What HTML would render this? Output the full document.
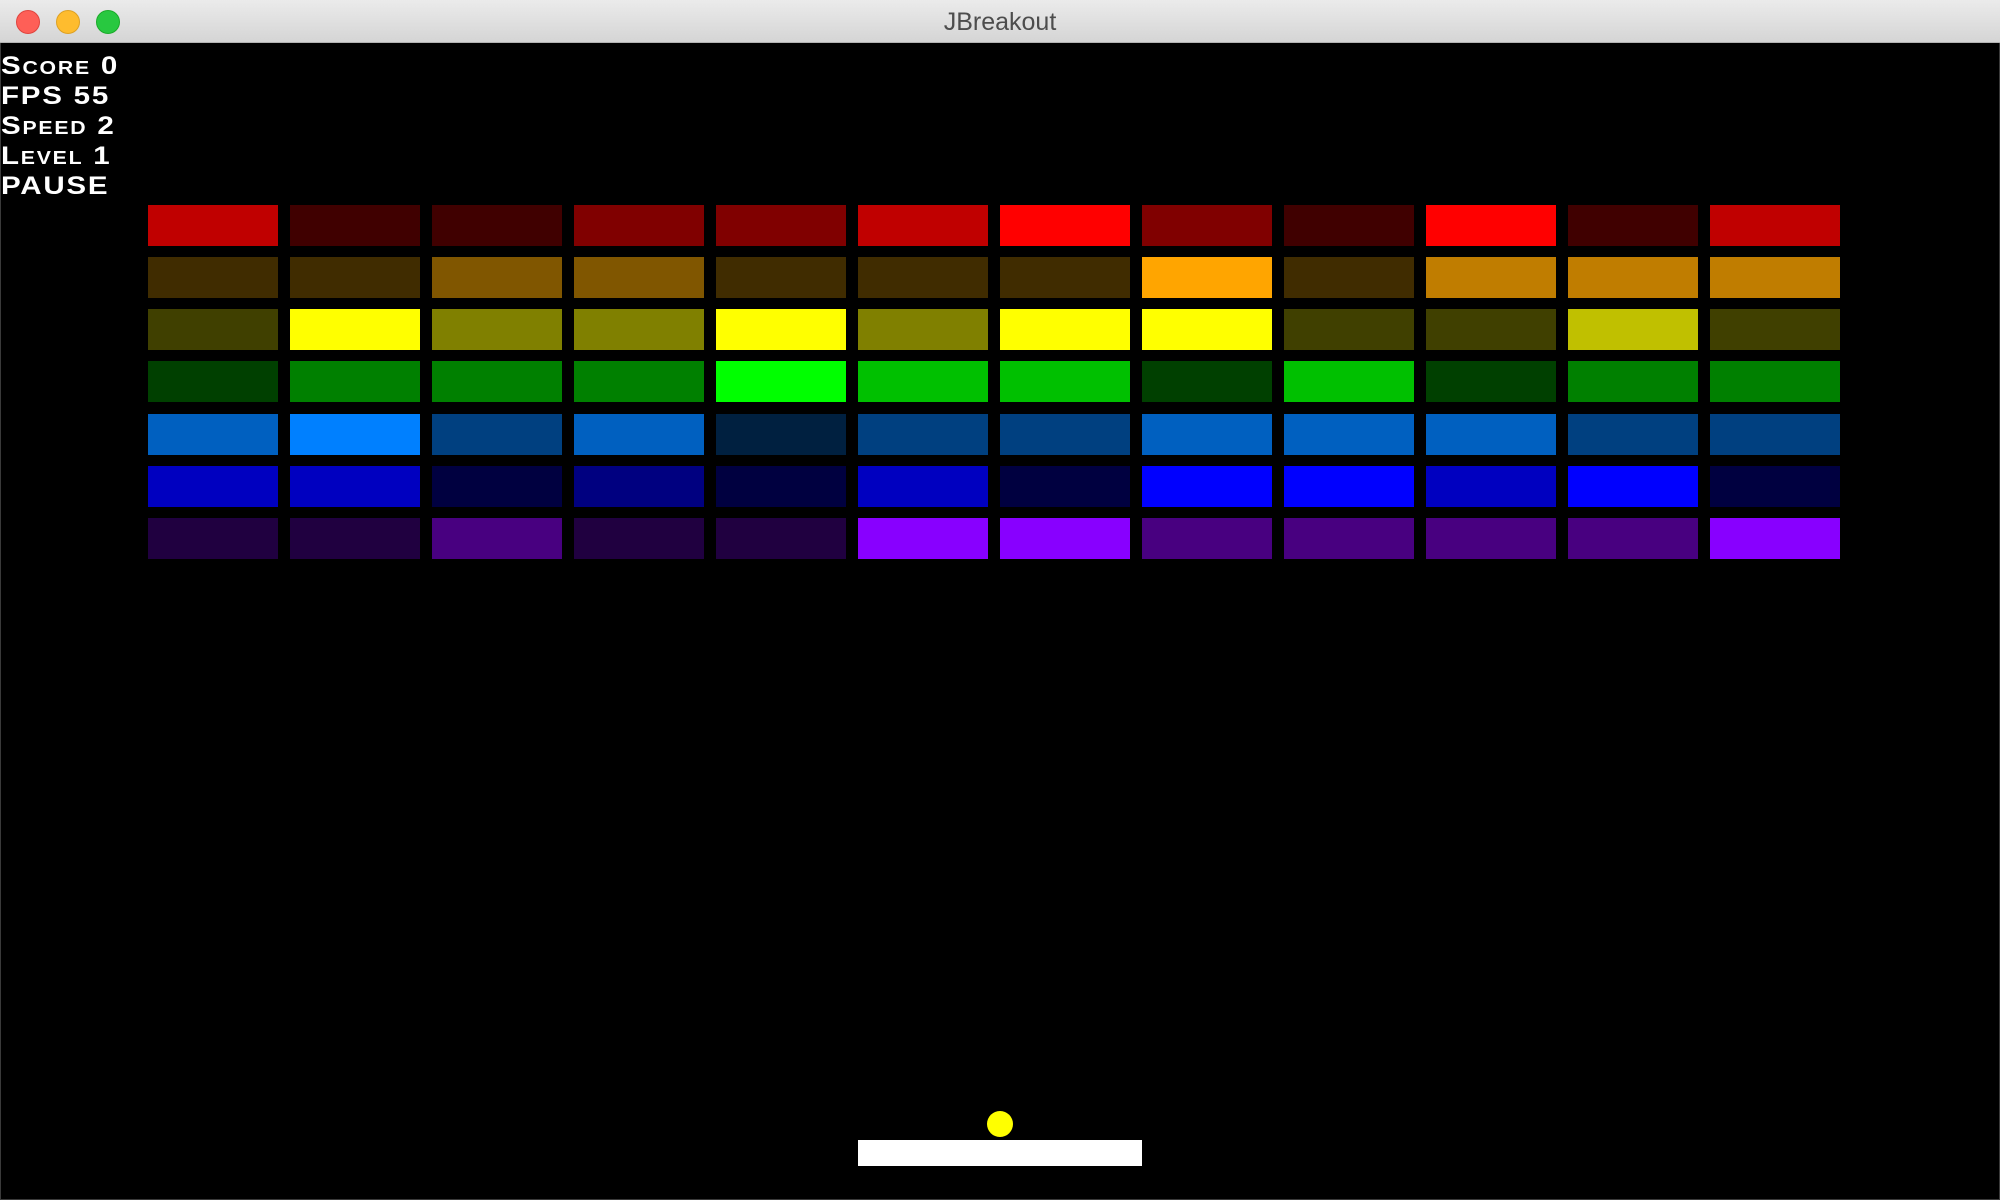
<!DOCTYPE html>
<html><head><meta charset="utf-8"><style>
html,body{margin:0;padding:0;width:2000px;height:1200px;overflow:hidden;background:#000}
#bar{position:absolute;left:0;top:0;width:2000px;height:43px;background:linear-gradient(#ebebeb,#d5d5d5);border-bottom:1px solid #b4b4b4;box-sizing:border-box}
#bar .t{position:absolute;left:0;width:2000px;top:8px;text-align:center;font:25px "Liberation Sans",sans-serif;color:#4d4d4d}
.l{position:absolute;top:10px;width:24px;height:24px;border-radius:50%}
#game{position:absolute;left:0;top:43px;width:2000px;height:1157px;background:#000;border-left:1px solid #3a3a3a;border-right:1px solid #3a3a3a;border-bottom:1px solid #3a3a3a;box-sizing:border-box}
.h{position:absolute;left:1px;font-family:"Liberation Sans",sans-serif;font-weight:bold;font-size:25px;font-variant:small-caps;letter-spacing:1.5px;color:#fff;line-height:30px;transform:scaleX(1.18);transform-origin:left}
.b{position:absolute;width:130px;height:41px}
</style></head><body>
<div id="bar"><div class="l" style="left:16px;background:#fe5f57;border:1px solid #e0443e;box-sizing:border-box"></div><div class="l" style="left:56px;background:#febc2e;border:1px solid #dea123;box-sizing:border-box"></div><div class="l" style="left:96px;background:#28c840;border:1px solid #1aab29;box-sizing:border-box"></div><div class="t">JBreakout</div></div>
<div id="game"></div>
<div class="h" style="top:51px">Score 0</div>
<div class="h" style="top:81px">FPS 55</div>
<div class="h" style="top:111px">Speed 2</div>
<div class="h" style="top:141px">Level 1</div>
<div class="h" style="top:171px">PAUSE</div>
<div id="bricks">
<div class="b" style="left:148px;top:205px;background:#c00000"></div><div class="b" style="left:290px;top:205px;background:#400000"></div><div class="b" style="left:432px;top:205px;background:#400000"></div><div class="b" style="left:574px;top:205px;background:#800000"></div><div class="b" style="left:716px;top:205px;background:#800000"></div><div class="b" style="left:858px;top:205px;background:#c00000"></div><div class="b" style="left:1000px;top:205px;background:#ff0000"></div><div class="b" style="left:1142px;top:205px;background:#800000"></div><div class="b" style="left:1284px;top:205px;background:#400000"></div><div class="b" style="left:1426px;top:205px;background:#ff0000"></div><div class="b" style="left:1568px;top:205px;background:#400000"></div><div class="b" style="left:1710px;top:205px;background:#c00000"></div>
<div class="b" style="left:148px;top:257px;background:#402c00"></div><div class="b" style="left:290px;top:257px;background:#402c00"></div><div class="b" style="left:432px;top:257px;background:#805600"></div><div class="b" style="left:574px;top:257px;background:#805600"></div><div class="b" style="left:716px;top:257px;background:#402c00"></div><div class="b" style="left:858px;top:257px;background:#402c00"></div><div class="b" style="left:1000px;top:257px;background:#402c00"></div><div class="b" style="left:1142px;top:257px;background:#ffa500"></div><div class="b" style="left:1284px;top:257px;background:#402c00"></div><div class="b" style="left:1426px;top:257px;background:#c07d00"></div><div class="b" style="left:1568px;top:257px;background:#c07d00"></div><div class="b" style="left:1710px;top:257px;background:#c07d00"></div>
<div class="b" style="left:148px;top:309px;background:#404000"></div><div class="b" style="left:290px;top:309px;background:#ffff00"></div><div class="b" style="left:432px;top:309px;background:#808000"></div><div class="b" style="left:574px;top:309px;background:#808000"></div><div class="b" style="left:716px;top:309px;background:#ffff00"></div><div class="b" style="left:858px;top:309px;background:#808000"></div><div class="b" style="left:1000px;top:309px;background:#ffff00"></div><div class="b" style="left:1142px;top:309px;background:#ffff00"></div><div class="b" style="left:1284px;top:309px;background:#404000"></div><div class="b" style="left:1426px;top:309px;background:#404000"></div><div class="b" style="left:1568px;top:309px;background:#c0c000"></div><div class="b" style="left:1710px;top:309px;background:#404000"></div>
<div class="b" style="left:148px;top:361px;background:#004000"></div><div class="b" style="left:290px;top:361px;background:#008000"></div><div class="b" style="left:432px;top:361px;background:#008000"></div><div class="b" style="left:574px;top:361px;background:#008000"></div><div class="b" style="left:716px;top:361px;background:#00ff00"></div><div class="b" style="left:858px;top:361px;background:#00c000"></div><div class="b" style="left:1000px;top:361px;background:#00c000"></div><div class="b" style="left:1142px;top:361px;background:#004000"></div><div class="b" style="left:1284px;top:361px;background:#00c000"></div><div class="b" style="left:1426px;top:361px;background:#004000"></div><div class="b" style="left:1568px;top:361px;background:#008000"></div><div class="b" style="left:1710px;top:361px;background:#008000"></div>
<div class="b" style="left:148px;top:414px;background:#0060c0"></div><div class="b" style="left:290px;top:414px;background:#0080ff"></div><div class="b" style="left:432px;top:414px;background:#004080"></div><div class="b" style="left:574px;top:414px;background:#0060c0"></div><div class="b" style="left:716px;top:414px;background:#002040"></div><div class="b" style="left:858px;top:414px;background:#004080"></div><div class="b" style="left:1000px;top:414px;background:#004080"></div><div class="b" style="left:1142px;top:414px;background:#0060c0"></div><div class="b" style="left:1284px;top:414px;background:#0060c0"></div><div class="b" style="left:1426px;top:414px;background:#0060c0"></div><div class="b" style="left:1568px;top:414px;background:#004080"></div><div class="b" style="left:1710px;top:414px;background:#004080"></div>
<div class="b" style="left:148px;top:466px;background:#0000c0"></div><div class="b" style="left:290px;top:466px;background:#0000c0"></div><div class="b" style="left:432px;top:466px;background:#000040"></div><div class="b" style="left:574px;top:466px;background:#000080"></div><div class="b" style="left:716px;top:466px;background:#000040"></div><div class="b" style="left:858px;top:466px;background:#0000c0"></div><div class="b" style="left:1000px;top:466px;background:#000040"></div><div class="b" style="left:1142px;top:466px;background:#0000ff"></div><div class="b" style="left:1284px;top:466px;background:#0000ff"></div><div class="b" style="left:1426px;top:466px;background:#0000c0"></div><div class="b" style="left:1568px;top:466px;background:#0000ff"></div><div class="b" style="left:1710px;top:466px;background:#000040"></div>
<div class="b" style="left:148px;top:518px;background:#200040"></div><div class="b" style="left:290px;top:518px;background:#200040"></div><div class="b" style="left:432px;top:518px;background:#480080"></div><div class="b" style="left:574px;top:518px;background:#200040"></div><div class="b" style="left:716px;top:518px;background:#200040"></div><div class="b" style="left:858px;top:518px;background:#8800ff"></div><div class="b" style="left:1000px;top:518px;background:#8800ff"></div><div class="b" style="left:1142px;top:518px;background:#480080"></div><div class="b" style="left:1284px;top:518px;background:#480080"></div><div class="b" style="left:1426px;top:518px;background:#480080"></div><div class="b" style="left:1568px;top:518px;background:#480080"></div><div class="b" style="left:1710px;top:518px;background:#8800ff"></div>
</div>
<div style="position:absolute;left:987px;top:1111px;width:26px;height:26px;border-radius:50%;background:#ffff00"></div>
<div style="position:absolute;left:858px;top:1140px;width:284px;height:26px;background:#fff"></div>
</body></html>
